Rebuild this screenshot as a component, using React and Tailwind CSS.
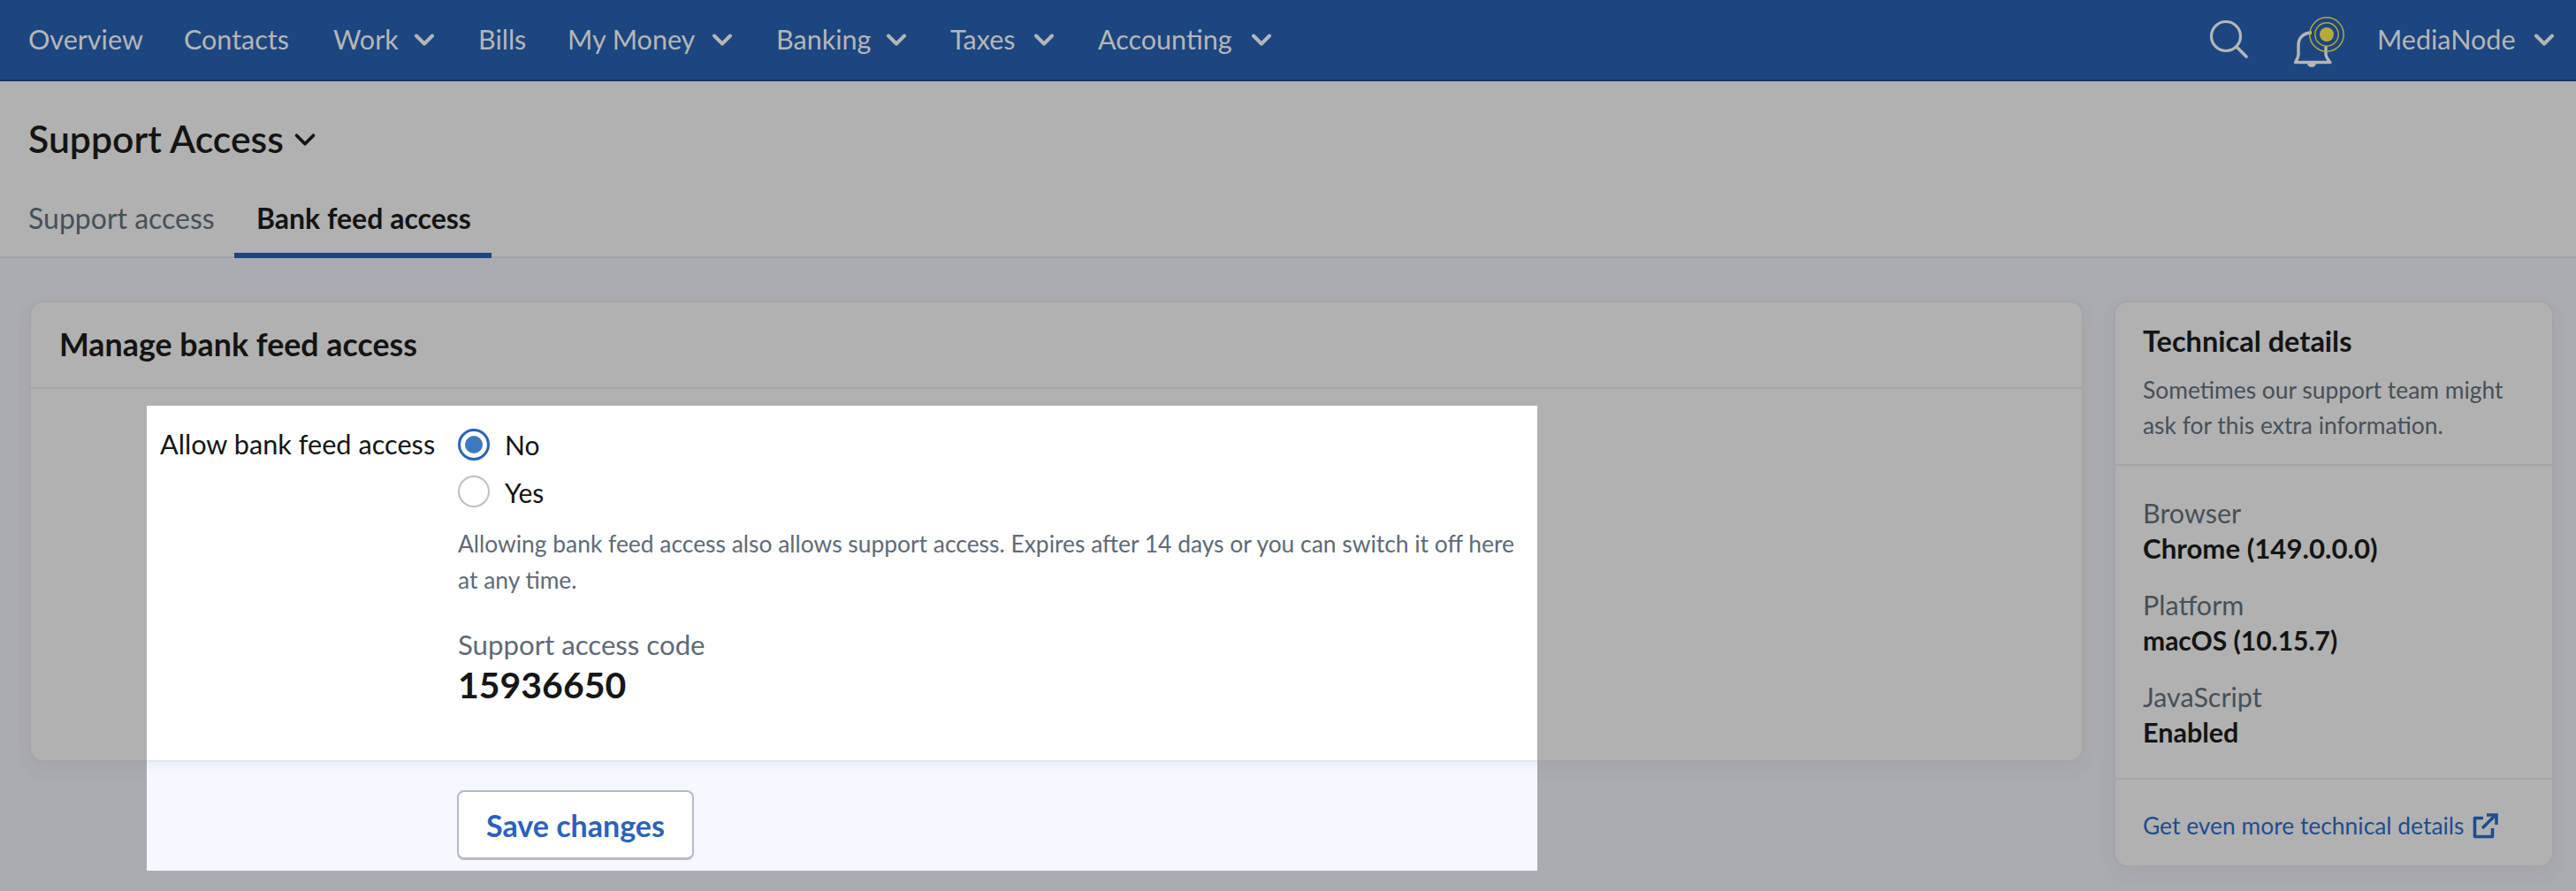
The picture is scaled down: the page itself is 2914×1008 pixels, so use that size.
import { ChevronDown } from "lucide-react";

const navItems = [
  { label: "Overview", width: "w-[176px]" },
  { label: "Contacts", width: "w-[169px]" },
  { label: "Work", width: "w-[164px]", menu: true },
  { label: "Bills", width: "w-[101px]" },
  { label: "My Money", width: "w-[236px]", menu: true },
  { label: "Banking", width: "w-[197px]", menu: true },
  { label: "Taxes", width: "w-[167px]", menu: true },
  { label: "Accounting", width: "w-[246px]", menu: true },
];

const techDetails = [
  { label: "Browser", value: "Chrome (149.0.0.0)", size: "text-[31.2px]" },
  { label: "Platform", value: "macOS (10.15.7)", size: "text-[30px]" },
  { label: "JavaScript", value: "Enabled", size: "text-[30.5px]" },
];

function NavChevron() {
  return (
    <svg width="22" height="14" viewBox="0 0 22 14" fill="none" className="ml-auto">
      <path d="M2 2.5l9 9 9-9" stroke="#b6b6b6" strokeWidth="4" strokeLinecap="round" strokeLinejoin="round" />
    </svg>
  );
}

function SearchIcon() {
  return (
    <svg width="48" height="48" viewBox="0 0 48 48" fill="none">
      <circle cx="20" cy="20" r="16.5" stroke="#b6b6b6" strokeWidth="3.2" />
      <path d="M32 32l11 11" stroke="#b6b6b6" strokeWidth="3.6" strokeLinecap="round" />
    </svg>
  );
}

function BellIcon() {
  return (
    <svg width="66" height="62" viewBox="0 0 66 62" fill="none">
      <path
        d="M25 22C15.5 22 10 28 10 36v10c0 4-2 7-3.5 9.5H46C44 53 41 50 41 46v-9"
        stroke="#b6b6b6"
        strokeWidth="3.4"
        strokeLinejoin="round"
      />
      <path d="M20 57a5 4 0 0 0 10 0z" fill="#b6b6b6" />
      <circle cx="42" cy="24" r="8" fill="#b5a93c" />
      <circle cx="42" cy="24" r="13.2" stroke="#b5a93c" strokeWidth="1.4" />
      <circle cx="42" cy="24" r="19.2" stroke="#b5a93c" strokeWidth="1.5" />
    </svg>
  );
}

function ExternalIcon() {
  return (
    <svg width="30" height="30" viewBox="0 0 30 30" fill="none" className="ml-[8px]">
      <path d="M13 6.5H3.5v21h20V18" stroke="#1e4d8f" strokeWidth="3.6" strokeLinejoin="round" />
      <path d="M12 18L26 4" stroke="#1e4d8f" strokeWidth="3.6" />
      <path d="M17 3h11v11" stroke="#1e4d8f" strokeWidth="3.6" />
    </svg>
  );
}

export default function App() {
  return (
    <div className="relative h-[1008px] overflow-hidden bg-[#aaacb1] font-[Lato,sans-serif] text-[#141414]">
      <header className="flex h-[92px] items-center border-b-2 border-[#17365f] bg-[#1c4680] pl-[32px] pr-[25px] text-[30.5px] text-[#b6b6b6]">
        <nav className="flex items-center">
          {navItems.map((item) => (
            <a key={item.label} className={`flex items-center whitespace-nowrap ${item.width}`}>
              {item.label}
              {item.menu && (
                <span className="ml-auto flex w-[72px] pr-[50px]">
                  <NavChevron />
                </span>
              )}
            </a>
          ))}
        </nav>
        <div className="ml-auto flex items-center">
          <SearchIcon />
          <div className="ml-[44px] mt-[2px]">
            <BellIcon />
          </div>
          <span className="ml-[33px] w-[160px] whitespace-nowrap">MediaNode</span>
          <span className="ml-[18px] flex w-[22px]">
            <NavChevron />
          </span>
        </div>
      </header>

      <section className="h-[200px] border-b-2 border-[#a3a3a7] bg-[#b1b1b1] pt-[41px]">
        <div className="flex h-[48px] items-center pl-[32px] text-[42.7px] font-semibold leading-[48px]">
          Support Access
          <ChevronDown size={38} strokeWidth={2.4} className="ml-[5px] mt-[2px]" />
        </div>
        <div className="mt-[45px] flex pl-[32px] text-[32px]">
          <a className="flex h-[66px] w-[233px] items-start pt-[1px] leading-[40px] text-[#465059]">Support access</a>
          <a className="flex h-[66px] w-[291px] items-start border-b-[6px] border-[#1c4680] pl-[25px] pt-[1px] font-bold leading-[40px]">
            Bank feed access
          </a>
        </div>
      </section>

      <main className="flex gap-[34px] pl-[33px] pt-[48px]">
        <div className="h-[522px] w-[2324px] rounded-[16px] border-2 border-[#a5a5a9] bg-[#b1b1b1] shadow-[0_8px_24px_rgba(60,70,90,0.06)]">
          <h2 className="flex h-[98px] items-center border-b-2 border-[#a5a5a9] pl-[32px] text-[35.8px] font-bold">
            Manage bank feed access
          </h2>
        </div>

        <aside className="h-[641px] w-[498px] rounded-[16px] border-2 border-[#a5a5a9] bg-[#b1b1b1] shadow-[0_8px_24px_rgba(60,70,90,0.06)]">
          <div className="border-b-2 border-[#a5a5a9] pb-[24px] pl-[31px] pt-[24px]">
            <h3 className="text-[32.5px] font-bold leading-[40px]">Technical details</h3>
            <p className="mt-[15px] text-[26.4px] leading-[40px] text-[#465059]">
              Sometimes our support team might
              <br />
              ask for this extra information.
            </p>
          </div>
          <div className="flex flex-col gap-[24px] border-b-2 border-[#a5a5a9] pb-[32px] pl-[31px] pt-[33px] leading-[40px]">
            {techDetails.map((row) => (
              <div key={row.label}>
                <div className="text-[30.5px] text-[#465059]">{row.label}</div>
                <div className={`font-bold ${row.size}`}>{row.value}</div>
              </div>
            ))}
          </div>
          <a className="flex items-center pl-[31px] pt-[32px] text-[26.4px] leading-[40px] text-[#1e4d8f]">
            Get even more technical details
            <ExternalIcon />
          </a>
        </aside>
      </main>

      <div className="absolute left-[166px] top-[459px] flex h-[526px] w-[1573px] flex-col">
        <div className="flex h-[401px] bg-white pl-[15px] pt-[24px]">
          <div className="w-[337px] text-[30.7px] leading-[40px]">Allow bank feed access</div>
          <div>
            <div className="flex h-[40px] items-center text-[30px]">
              <span className="-mt-[1px] flex h-[36px] w-[36px] items-center justify-center rounded-full border-[3px] border-[#2a63b8]">
                <span className="h-[20px] w-[20px] rounded-full bg-[#3a7bc0]" />
              </span>
              <span className="ml-[17px]">No</span>
            </div>
            <div className="mt-[14px] flex h-[40px] items-center text-[30px]">
              <span className="-mt-[3px] h-[36px] w-[36px] rounded-full border-2 border-[#bcc0c8]" />
              <span className="ml-[17px]">Yes</span>
            </div>
            <p className="mt-[18px] whitespace-nowrap text-[26.4px] leading-[41px] text-[#5e6a76]">
              Allowing bank feed access also allows support access. Expires after 14 days or you can switch it off here
              <br />
              at any time.
            </p>
            <div className="mt-[32px] text-[31.2px] leading-[40px] text-[#5e6a76]">Support access code</div>
            <div className="mt-[2px] text-[41px] font-bold leading-[48px] text-[#161616]">15936650</div>
          </div>
        </div>
        <div className="flex-1 border-t-2 border-[#e3e6ee] bg-gradient-to-b from-[#edf1fa] to-[#f5f8fe] to-[12%] pl-[351px] pt-[32px]">
          <button className="h-[79px] w-[268px] rounded-[8px] border-2 border-b-[3px] border-[#b5bac6] bg-white text-[34px] font-bold text-[#2a62bb]">
            Save changes
          </button>
        </div>
      </div>
    </div>
  );
}
